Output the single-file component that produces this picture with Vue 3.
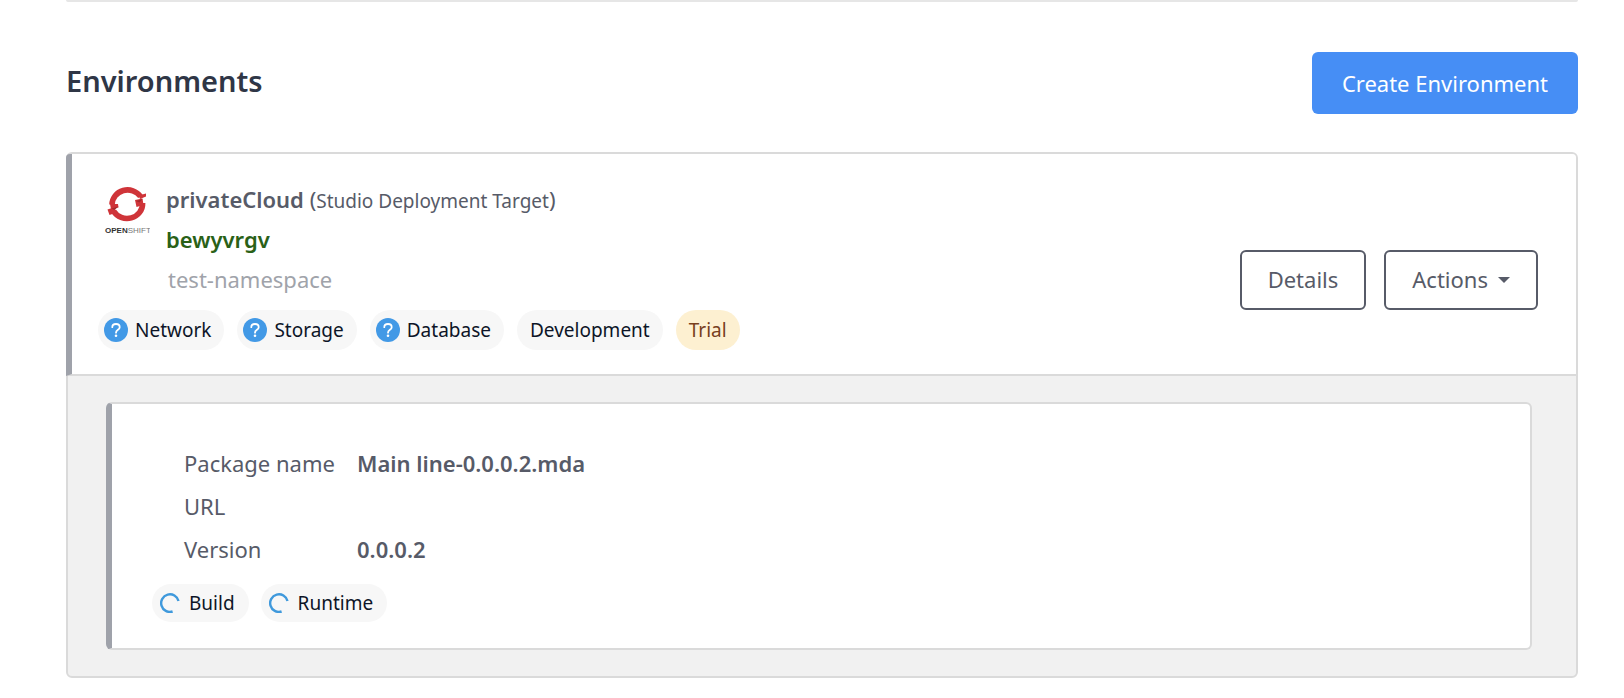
<script setup>
const services = ['Network', 'Storage', 'Database']
const details = [
  { label: 'Package name', value: 'Main line-0.0.0.2.mda' },
  { label: 'URL', value: '' },
  { label: 'Version', value: '0.0.0.2' },
]
const stages = ['Build', 'Runtime']
</script>

<template>
  <main class="page">
    <div class="previous-edge"></div>
    <header class="heading">
      <h1>Environments</h1>
      <button class="primary" type="button">Create Environment</button>
    </header>

    <section class="environment">
      <div class="summary">
        <div class="info">
          <div class="identity">
            <svg class="logo" viewBox="0 0 46 50" role="img" aria-label="OpenShift">
              <g fill="none" stroke="#cf3439" stroke-width="5.600">
                <path d="M8 18.500A15.600 15 0 0 1 36.500 10.500" />
                <path d="M38.600 17A15.600 15 0 0 1 9.500 25" />
              </g>
              <path fill="#cf3439" d="M34.500 9.500l7.500-2v3l-6 2.500zM31 14l7.500-1.500 1 6.500-7 2zM6 18l8 0 .500 3.500-7.500 1.500zM3.500 23.500l6-2 3 5-7 2.500z" />
              <path fill="#a5282d" d="M32 15l6.500-2-3 3.500zM7.500 22.500l7-2-4 3.500z" />
              <text x="1" y="47"><tspan class="logo-open">OPEN</tspan><tspan class="logo-shift">SHIFT</tspan></text>
            </svg>
            <div class="names">
              <h2>privateCloud <span class="kind">(<small>Studio Deployment Target</small>)</span></h2>
              <p class="app-name">bewyvrgv</p>
              <p class="namespace">test-namespace</p>
            </div>
          </div>
          <div class="pills">
            <span v-for="name in services" :key="name" class="pill status">
              <svg class="help" viewBox="0 0 24 24" aria-hidden="true">
                <circle cx="12" cy="12" r="12" fill="#4299e6" />
                <path d="M8.300 9.200C8.300 4.900 15.700 4.900 15.700 9.200C15.700 11.900 12 11.700 12 14.700" fill="none" stroke="#fff" stroke-width="1.800" stroke-linecap="round" />
                <circle cx="12" cy="17.700" r="1.300" fill="#fff" />
              </svg>
              {{ name }}
            </span>
            <span class="pill">Development</span>
            <span class="pill trial">Trial</span>
          </div>
        </div>
        <div class="actions">
          <button class="outline" type="button">Details</button>
          <button class="outline" type="button">Actions
            <svg class="caret" viewBox="0 0 12 8" aria-hidden="true"><path d="M0 2h12L6 8z" fill="#575b68" /></svg>
          </button>
        </div>
      </div>

      <div class="body">
        <article class="package">
          <dl>
            <template v-for="row in details" :key="row.label">
              <dt>{{ row.label }}</dt>
              <dd>{{ row.value }}</dd>
            </template>
          </dl>
          <div class="pills stages">
            <span v-for="stage in stages" :key="stage" class="pill stage">
              <svg class="spinner" viewBox="0 0 20 20" aria-hidden="true">
                <path d="M18.500 8A8.800 8.800 0 1 0 12.600 18.500" fill="none" stroke="#3f99dc" stroke-width="2.400" />
              </svg>
              {{ stage }}
            </span>
          </div>
        </article>
      </div>
    </section>
  </main>
</template>

<style>
body {
  background: #fff;
}
</style>

<style scoped>
.page {
  box-sizing: border-box;
  padding: 0 46px 20px 66px;
  font-family: "Noto Sans", sans-serif;
  font-size: 22px;
  line-height: 40px;
  color: #575b68;
}
h1, h2, p, dl, dd {
  margin: 0;
}
.previous-edge {
  height: 2px;
  background: #e6e6e6;
  border-radius: 0 0 6px 6px;
}
.heading {
  display: flex;
  align-items: flex-start;
  justify-content: space-between;
  padding: 50px 0 38px;
}
h1 {
  padding-top: 9px;
  font-size: 29px;
  font-weight: 600;
  color: #2f3646;
}
button {
  font: inherit;
  cursor: pointer;
  border-radius: 6px;
}
.primary {
  height: 62px;
  padding: 0 30px;
  border: 0;
  background: #468ef5;
  color: #fff;
}
.environment {
  border: 2px solid #dadada;
  border-radius: 6px;
  background: #f1f1f1;
}
.summary {
  display: flex;
  align-items: flex-start;
  justify-content: space-between;
  margin-left: -2px;
  padding: 25px 38px 24px 26px;
  border-left: 6px solid #9fa2aa;
  border-bottom: 2px solid #dadada;
  border-top-left-radius: 4px;
  border-top-right-radius: 4px;
  background: #fff;
}
.identity {
  display: flex;
  gap: 16px;
  padding-left: 6px;
}
.logo {
  width: 46px;
  height: 50px;
  margin-top: 7px;
  flex: none;
}
.logo text {
  font-family: "Liberation Sans", sans-serif;
  font-size: 8px;
}
.logo-open {
  font-weight: 700;
  fill: #333;
}
.logo-shift {
  fill: #777;
}
h2 {
  font-size: 22px;
  font-weight: 600;
}
.kind {
  font-weight: 400;
}
.kind small {
  font-size: 19px;
  line-height: 1;
}
.app-name {
  font-weight: 600;
  color: #2a6117;
}
.namespace {
  padding-left: 2px;
  color: #a0a3aa;
}
.pills {
  display: flex;
  gap: 13px;
  padding-top: 11px;
}
.pill {
  display: flex;
  align-items: center;
  height: 40px;
  padding: 0 13px;
  border-radius: 20px;
  background: #f7f7f7;
  color: #0d1527;
  font-size: 19px;
}
.status {
  gap: 7px;
  padding: 0 13px 0 6px;
}
.help {
  width: 24px;
  height: 24px;
}
.trial {
  background: #fdf0d1;
  color: #78401d;
}
.actions {
  display: flex;
  gap: 18px;
  padding-top: 71px;
}
.outline {
  display: flex;
  align-items: center;
  gap: 10px;
  height: 60px;
  padding: 0 26px 2px;
  border: 2px solid #575b68;
  background: #fff;
  color: #575b68;
}
.caret {
  width: 12px;
  height: 8px;
}
.body {
  padding: 26px 44px 26px 38px;
}
.package {
  padding: 38px 40px 26px;
  border: 2px solid #dadada;
  border-left: 6px solid #9fa2aa;
  border-radius: 6px;
  background: #fff;
}
dl {
  display: grid;
  grid-template-columns: 173px 1fr;
  grid-auto-rows: 43px;
  padding-left: 32px;
  line-height: 43px;
}
dd {
  font-weight: 600;
}
.stages {
  gap: 12px;
  padding-top: 13px;
}
.stage {
  height: 38px;
  gap: 9px;
  padding: 0 14px 0 8px;
}
.spinner {
  width: 20px;
  height: 20px;
}
</style>
